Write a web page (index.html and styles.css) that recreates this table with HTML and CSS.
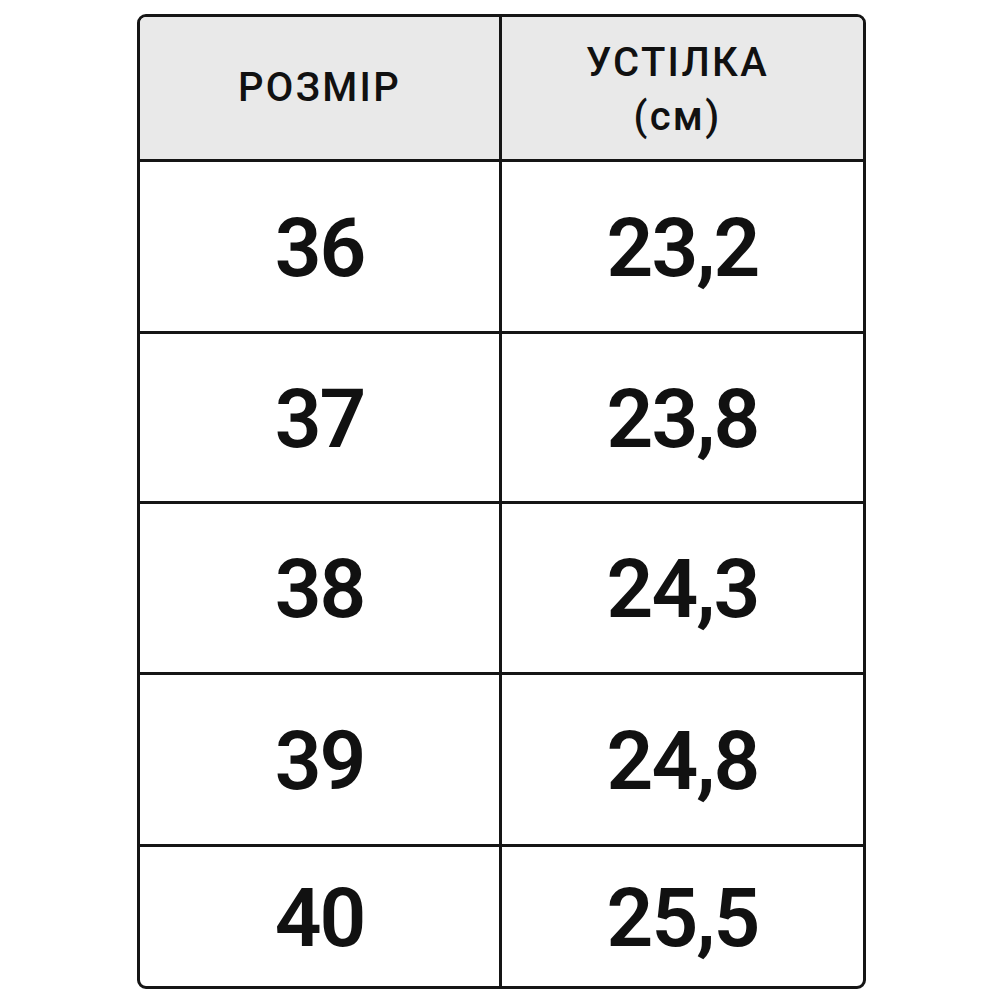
FILE: index.html
```html
<!DOCTYPE html>
<html lang="uk">
<head>
<meta charset="utf-8">
<title>Розмірна сітка</title>
<link rel="stylesheet" href="styles.css">
</head>
<body>
<div class="size-table">
  <div class="cell head">РОЗМІР</div>
  <div class="cell head head-two last-col">УСТІЛКА<br>(см)</div>
  <div class="cell num">36</div>
  <div class="cell num last-col">23,2</div>
  <div class="cell num">37</div>
  <div class="cell num last-col">23,8</div>
  <div class="cell num">38</div>
  <div class="cell num last-col">24,3</div>
  <div class="cell num">39</div>
  <div class="cell num last-col">24,8</div>
  <div class="cell num last-row">40</div>
  <div class="cell num last-col last-row">25,5</div>
</div>
</body>
</html>
```

FILE: styles.css
```css
html, body {
  margin: 0;
  padding: 0;
  background: #ffffff;
}

body {
  font-family: Roboto, "Liberation Sans", sans-serif;
  color: #111111;
}

.size-table {
  margin: 14px 0 0 137px;
  width: 723px;
  border: 3px solid #151515;
  border-radius: 9px;
  overflow: hidden;
  display: grid;
  grid-template-columns: 362px 361px;
  grid-template-rows: 145px 172px 170px 171px 172px 139px;
}

.cell {
  display: flex;
  align-items: center;
  justify-content: center;
  text-align: center;
  border-right: 3px solid #151515;
  border-bottom: 3px solid #151515;
}

.last-col {
  border-right: none;
}

.last-row {
  border-bottom: none;
}

.head {
  background: #e9e9e9;
  font-weight: 500;
  font-size: 40px;
  line-height: 50px;
  letter-spacing: 2.3px;
}

.head-two {
  line-height: 54px;
  padding-top: 4px;
  padding-right: 10px;
  box-sizing: border-box;
}

.num {
  font-weight: 600;
  font-size: 82px;
  line-height: 1;
  letter-spacing: -2px;
  padding-top: 2px;
}
```
